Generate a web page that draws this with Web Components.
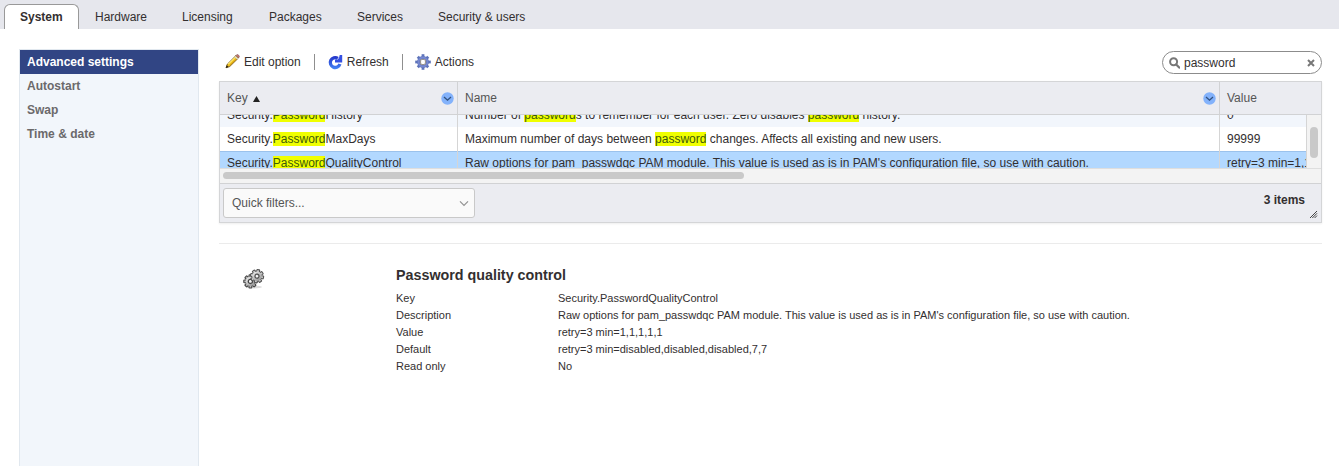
<!DOCTYPE html>
<html lang="en">
<head>
<meta charset="utf-8">
<title>System - Advanced settings</title>
<style>
html,body{margin:0;height:466px;overflow:hidden;background:#fff}
body{font:12px/24px "Liberation Sans",Arial,sans-serif;color:#332f30}
</style>
</head>
<body>
<settings-page></settings-page>
<script>
const define = (name, html) => {
  const t = document.createElement('template');
  t.innerHTML = html;
  customElements.define(name, class extends HTMLElement {
    constructor() {
      super();
      this.attachShadow({ mode: 'open' }).append(t.content.cloneNode(true));
    }
  });
};

define('tab-item', `<style>
:host{display:block;box-sizing:border-box;height:25px;padding:1px 0 0 16px;white-space:nowrap}
:host([active]){font-weight:bold;background:#fff;border:1px solid #999;border-bottom:0;border-radius:6px 6px 0 0;padding:0 0 0 15px;height:25px}
</style><slot></slot>`);

define('tab-bar', `<style>
:host{display:flex;box-sizing:border-box;height:29px;padding:4px 0 0 4px;background:#e6e7ed}
</style><slot></slot>`);

define('nav-item', `<style>
:host{display:block;height:24px;padding-left:7px;font-weight:bold;color:#6b696b}
:host([active]){background:#314584;color:#fff}
</style><slot></slot>`);

define('side-nav', `<style>
:host{display:block;box-sizing:border-box;width:180px;height:417px;background:#f2f6fb;border:1px solid #e1e8ef;border-bottom:0}
</style><slot></slot>`);

define('ui-icon', `<style>:host{display:block;line-height:0}</style><slot></slot>`);
const icons = {
  pencil: `<svg width="16" height="16" viewBox="-1 0 17 17"><path d="M1.2 14.6 2.5 10.9 11.8 1.6 14.4 4.2 5.1 13.3Z" fill="#f1c21d" stroke="#70551c"/><path d="m3.5 10.8 8-7.7" stroke="#ffec77" stroke-width="1.2"/><path d="m5 12.5 8-7.8" stroke="#c99116"/><path d="m10.8 2.6 2.7 2.7" stroke="#d7d7d7" stroke-width="1.5"/><path d="m11.8 1.5.8-.8q1-.4 2 .6t.6 2l-.8.8Z" fill="#ca7771" stroke="#805458" stroke-width=".7"/><path d="m.8 15 1.2-3 1.8 1.9Z" fill="#252014"/></svg>`,
  refresh: `<svg width="15" height="16" viewBox="0 0 15 16"><defs><linearGradient id="r" gradientUnits="userSpaceOnUse" x1="0" y1="1" x2="0" y2="15"><stop stop-color="#202bc5"/><stop offset="1" stop-color="#4384f5"/></linearGradient></defs><path d="M9.8 4.4A4.9 4.9 0 1 0 11.9 10" fill="none" stroke="url(#r)" stroke-width="3.3"/><path d="M7 8.6V5.4H9.9L11.2 3.3 11.7.9H14.2V8.6Z" fill="#3450e2"/></svg>`,
  gear: `<svg width="16" height="16" viewBox="0 0 16 16"><g fill="#5d73ba"><path d="M6.6.2h2.8v15.6H6.6z"/><path d="M6.6.6h2.8v14.8H6.6z" transform="rotate(45 8 8)"/><path d="M6.6.2h2.8v15.6H6.6z" transform="rotate(90 8 8)"/><path d="M6.6.6h2.8v14.8H6.6z" transform="rotate(135 8 8)"/></g><circle cx="8" cy="8" r="4.4" fill="#fff" stroke="#5d73ba" stroke-width="3"/><circle cx="8" cy="8" r="4.5" fill="none" stroke="#7788d0" stroke-width="1.8"/><rect x="5.5" y="5.5" width="5" height="5" rx="1.4" fill="#fff" stroke="#999490" stroke-width="1.2"/></svg>`
};
define('tool-button', `<style>
:host{display:flex;align-items:center;height:24px}
ui-icon{height:16px;margin-right:4px}
:host([icon=gear]) ui-icon{margin:0 4px 0 -1px}
</style><ui-icon></ui-icon><slot></slot>`);

define('tool-sep', `<style>:host{display:block;width:1px;height:16px;background:#8f8f8f}</style>`);

define('search-box', `<style>
:host{display:flex;box-sizing:border-box;align-items:center;width:160px;height:23px;border:1px solid #8c8c8c;border-radius:12px;background:#fff;padding:0 6px}
span{flex:1;margin-left:4px;padding-top:1px}
</style><svg width="11" height="12" viewBox="0 0 11 12"><circle cx="4.6" cy="4.8" r="3.5" fill="none" stroke="#777" stroke-width="2"/><path d="m7.2 7.4 3 3.2" stroke="#777" stroke-width="2.2" stroke-linecap="round"/></svg><span><slot></slot></span><svg width="8" height="8" viewBox="0 0 8 8"><path d="m1 1 6 6m0-6-6 6" stroke="#777" stroke-width="2"/></svg>`);

define('head-cell', `<style>
:host{display:flex;box-sizing:border-box;align-items:center;height:32px;padding:0 3px 0 7px;border-right:1px solid #d1d2d4;color:#555}
:host([last]){border-right:0}
:host([last]) .m{display:none}
.t{flex:1;display:flex;align-items:center}
</style><span class="t"><slot></slot></span><svg class="m" width="13" height="13" viewBox="0 0 13 13"><circle cx="6.5" cy="6.5" r="6.2" fill="#83b2fb"/><path d="m3 5 3.5 3.2L10 5" fill="none" stroke="#31517e" stroke-width="1.3"/></svg>`);

define('grid-row', `<style>
:host{display:grid;grid-template-columns:238px 762px 1fr;height:24px;background:#fff;box-sizing:border-box}
:host([alt]){background:#f2f6fc}
:host([selected]){background:#b2d8ff;box-shadow:inset 0 1px #9bc2ec}
::slotted(*){border-right:1px solid #d5d5d5;padding-left:7px;white-space:pre;overflow:hidden}
::slotted(:last-child){border-right:0}
</style><slot></slot>`);

define('high-light', `<style>:host{background:#f0ff00;color:#3d5a0b}</style><slot></slot>`);

define('quick-filter', `<style>
:host{display:flex;box-sizing:border-box;align-items:center;width:252px;height:30px;border:1px solid #c9c9c9;border-radius:3px;background:#fafafa;color:#555;padding:0 5px 0 8px}
span{flex:1}
</style><span><slot></slot></span><svg width="10" height="7" viewBox="0 0 10 7"><path d="m1 1.4 4 4 4-4" fill="none" stroke="#929292" stroke-width="1.2"/></svg>`);

define('data-grid', `<style>
:host{display:block;box-sizing:border-box;width:1103px;height:142px;border:1px solid #d4d5d7;background:#ebecf1;box-shadow:0 1px 2px #eee}
.head{display:grid;grid-template-columns:238px 762px 1fr;height:32px;border-bottom:1px solid #d1d2d4}
.view{display:flex;height:53px;overflow:hidden}
.rows{width:1086px;height:53px;overflow:hidden}
.inner{margin-top:-12px}
.vs{box-sizing:border-box;flex:1;background:#f3f3f3;border-left:1px solid #d5d5d5;padding:12px 3px 0}
.vs i{display:block;width:8px;height:31px;border-radius:4px;background:#c9c9c9}
.hs{box-sizing:border-box;height:15px;border-top:1px solid #dedede;background:#f3f3f3;padding:3px 0 0 3px}
.hs i{display:block;width:521px;height:7px;border-radius:4px;background:#c9c9c9}
.foot{display:flex;box-sizing:border-box;height:39px;border-top:1px solid #d1d2d4;padding:4px 3px 0;justify-content:space-between}
.right{display:flex;font-weight:bold}
.right svg{margin:22px 0 0 4px}
.count{display:block}
.tri{margin:2px 0 0 5px}
</style>
<div class="head"><head-cell>Key<svg class="tri" width="7" height="6" viewBox="0 0 7 6"><path d="M3.5 0 7 6H0Z" fill="#222"/></svg></head-cell><head-cell>Name</head-cell><head-cell last>Value</head-cell></div>
<div class="view"><div class="rows"><div class="inner"><slot></slot></div></div><div class="vs"><i></i></div></div>
<div class="hs"><i></i></div>
<div class="foot"><quick-filter>Quick filters...</quick-filter><div class="right"><span class="count">3 items</span><svg width="9" height="9" viewBox="0 0 9 9"><path d="m1 8 7-7M3.3 8 8 3.3M5.6 8 8 5.6" stroke="#444" stroke-width="1"/></svg></div></div>`);

define('detail-row', `<style>
:host{display:grid;grid-template-columns:162px 1fr;font-size:11px;line-height:17px;white-space:nowrap}
</style><slot name="label"></slot><slot></slot>`);

define('detail-panel', `<style>
:host{display:grid;grid-template-columns:177px 1fr;box-sizing:border-box;width:1103px;margin-top:20px;border-top:1px solid #ebebeb}
.ic{padding:24px 0 0 24px;line-height:0}
h2{margin:21px 0 5px;font-size:14.3px;line-height:20px;font-weight:bold}
</style>
<div class="ic"><svg width="22" height="22" viewBox="0 0 22 22">
<defs><linearGradient id="a" x2="1" y2="1"><stop stop-color="#f4f4f4"/><stop offset="1" stop-color="#8a8a8a"/></linearGradient>
<g id="g"><g id="h"><rect x="-1.4" y="-6.6" width="2.8" height="13.2" rx=".6"/><rect x="-1.4" y="-6.6" width="2.8" height="13.2" rx=".6" transform="rotate(90)"/></g><use href="#h" transform="rotate(45)"/></g></defs>
<ellipse cx="11" cy="19" rx="8" ry="1.5" fill="#aaa" opacity=".4"/>
<g transform="translate(7.4 13.4)"><use href="#g" fill="#bbb" stroke="#444" stroke-width="1.1"/><circle r="4.7" fill="url(#a)"/><circle r="2.1" fill="#f5f5f5" stroke="#444" stroke-width="1.3"/></g>
<g transform="translate(14 8.2) rotate(12)"><use href="#g" fill="#ccc" stroke="#555" stroke-width="1.1"/><circle r="4.8" fill="url(#a)"/><circle r="2" fill="#f5f5f5" stroke="#555" stroke-width="1.3"/></g>
</svg></div><div><h2><slot name="title"></slot></h2><slot></slot></div>`);

define('settings-page', `<style>
:host{display:block}
.body{display:grid;grid-template-columns:180px 1103px;column-gap:20px;padding:20px 0 0 19px}
.bar{display:flex;align-items:center;height:24px;margin-bottom:7px;padding:1px 0 0 5px}
.bar tool-sep{margin:0 13px}
.bar search-box{margin-left:auto;margin-top:1px}
</style>
<tab-bar><tab-item active style="width:75px">System</tab-item><tab-item style="width:87px">Hardware</tab-item><tab-item style="width:87px">Licensing</tab-item><tab-item style="width:88px">Packages</tab-item><tab-item style="width:81px">Services</tab-item><tab-item>Security &amp; users</tab-item></tab-bar>
<div class="body">
<side-nav><nav-item active>Advanced settings</nav-item><nav-item>Autostart</nav-item><nav-item>Swap</nav-item><nav-item>Time &amp; date</nav-item></side-nav>
<main>
<div class="bar"><tool-button icon="pencil">Edit option</tool-button><tool-sep></tool-sep><tool-button icon="refresh">Refresh</tool-button><tool-sep></tool-sep><tool-button icon="gear">Actions</tool-button><search-box>password</search-box></div>
<data-grid>
<grid-row alt><div>Security.<high-light>Password</high-light>History</div><div>Number of <high-light>password</high-light>s to remember for each user. Zero disables <high-light>password</high-light> history.</div><div>0</div></grid-row>
<grid-row><div>Security.<high-light>Password</high-light>MaxDays</div><div>Maximum number of days between <high-light>password</high-light> changes. Affects all existing and new users.</div><div>99999</div></grid-row>
<grid-row selected><div>Security.<high-light>Password</high-light>QualityControl</div><div>Raw options for pam_passwdqc PAM module. This value is used as is in PAM's configuration file, so use with caution.</div><div>retry=3 min=1,1,1,1,1</div></grid-row>
</data-grid>
<detail-panel><span slot="title">Password quality control</span>
<detail-row><span slot="label">Key</span><span>Security.PasswordQualityControl</span></detail-row>
<detail-row><span slot="label">Description</span><span>Raw options for pam_passwdqc PAM module. This value is used as is in PAM's configuration file, so use with caution.</span></detail-row>
<detail-row><span slot="label">Value</span><span>retry=3 min=1,1,1,1,1</span></detail-row>
<detail-row><span slot="label">Default</span><span>retry=3 min=disabled,disabled,disabled,7,7</span></detail-row>
<detail-row><span slot="label">Read only</span><span>No</span></detail-row>
</detail-panel>
</main></div>`);

const page = document.querySelector('settings-page').shadowRoot;
page.querySelectorAll('tool-button').forEach(b => {
  b.shadowRoot.querySelector('ui-icon').innerHTML = icons[b.getAttribute('icon')];
});
</script>
</body>
</html>
